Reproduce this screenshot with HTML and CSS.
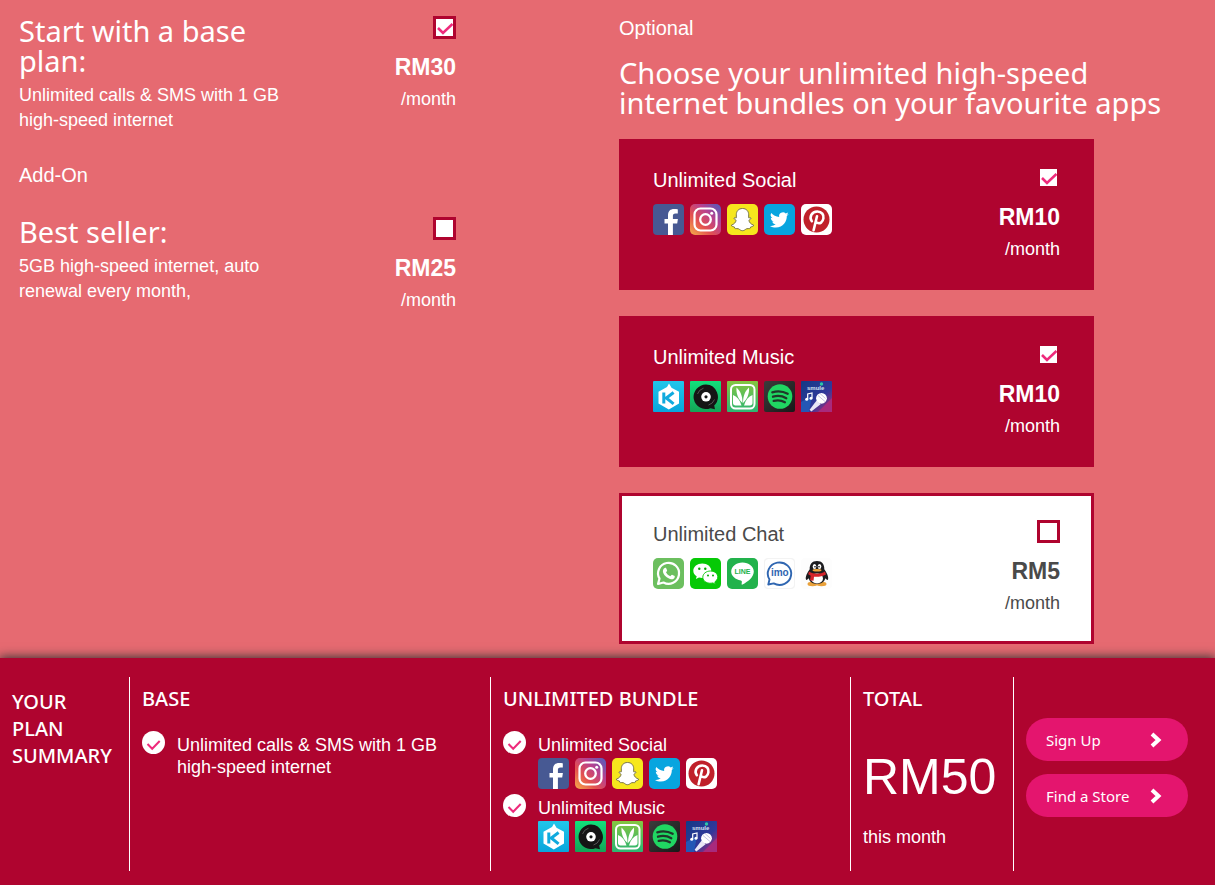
FILE: index.html
```html
<!DOCTYPE html>
<html lang="en">
<head>
  <meta charset="UTF-8">
  <meta name="viewport" content="width=device-width, initial-scale=1.0">
  <title>Build Your Plan</title>
  <link rel="stylesheet" href="styles.css">
</head>
<body>
  <!-- Gradients for the app icons -->
  <svg class="gradients" aria-hidden="true">
    <defs>
      <linearGradient id="igGrad" x1="0" y1="1" x2="1" y2="0">
        <stop offset="0" stop-color="#f5b04a"/>
        <stop offset="0.35" stop-color="#e4504f"/>
        <stop offset="0.65" stop-color="#b8418f"/>
        <stop offset="1" stop-color="#4b5fc0"/>
      </linearGradient>
      <linearGradient id="kkGrad" x1="0" y1="0" x2="0" y2="1">
        <stop offset="0" stop-color="#22c6ea"/>
        <stop offset="1" stop-color="#08a5dc"/>
      </linearGradient>
      <linearGradient id="joGrad" x1="0" y1="0" x2="0" y2="1">
        <stop offset="0" stop-color="#12e07c"/>
        <stop offset="1" stop-color="#14a457"/>
      </linearGradient>
      <linearGradient id="saGrad" x1="0" y1="0" x2="0" y2="1">
        <stop offset="0" stop-color="#86c540"/>
        <stop offset="1" stop-color="#2bb673"/>
      </linearGradient>
      <linearGradient id="spGrad" x1="0" y1="0" x2="1" y2="1">
        <stop offset="0" stop-color="#3c3c3c"/>
        <stop offset="1" stop-color="#181818"/>
      </linearGradient>
      <linearGradient id="smGrad" x1="0" y1="0" x2="1" y2="1">
        <stop offset="0" stop-color="#123a86"/>
        <stop offset="0.6" stop-color="#33389a"/>
        <stop offset="1" stop-color="#c02b6d"/>
      </linearGradient>
    </defs>
  </svg>

  <!-- App icons, reused in the cards and in the summary -->
  <svg class="sprite" aria-hidden="true">
    <symbol id="facebook" viewBox="0 0 31 31">
      <rect width="31" height="31" rx="4" fill="#475993"/>
      <path d="M15 31V19.500h-3.500v-4.500h3.500v-3.500c0-4.500 2.500-6.500 6-6.500 1.700 0 3.100.1 3.800.3v4.200h-2.300c-2 0-2.600 1-2.600 2.500v3h5l-.7 4.500h-4.300V31z" fill="#fff"/>
    </symbol>
    <symbol id="instagram" viewBox="0 0 31 31">
      <rect width="31" height="31" rx="5" fill="url(#igGrad)"/>
      <rect x="4.500" y="4.500" width="22" height="22" rx="6" fill="none" stroke="#fff" stroke-width="2.200"/>
      <circle cx="15.500" cy="15.500" r="5.300" fill="none" stroke="#fff" stroke-width="2.300"/>
      <circle cx="21.700" cy="9.300" r="1.500" fill="#fff"/>
    </symbol>
    <symbol id="snapchat" viewBox="0 0 31 31">
      <rect width="31" height="31" rx="5" fill="#f6e71d"/>
      <path d="M15.500 4.500c-4 0-6.200 2.800-6.200 6.300v3c-.8.300-2-.6-2.300.4-.2 1 2 1.300 2 2.300 0 1.600-2.200 4-4.600 4.600-.5 1.300 2.300 1.600 3 1.900.4.600.2 1.600.9 1.700 1 .1 2-.4 3.200.1 1.200.6 2.200 1.900 4 1.900s2.800-1.300 4-1.900c1.200-.5 2.200 0 3.200-.1.700-.1.500-1.100.9-1.700.7-.3 3.500-.6 3-1.900-2.400-.6-4.600-3-4.600-4.600 0-1 2.200-1.300 2-2.300-.3-1-1.500-.1-2.300-.4v-3c0-3.500-2.200-6.300-6.200-6.300z" fill="#fff" stroke="#777449" stroke-width="1"/>
    </symbol>
    <symbol id="twitter" viewBox="0 0 31 31">
      <rect width="31" height="31" rx="5" fill="#08a5df"/>
      <path d="M24.700 10.100a7.600 7.600 0 0 1-2.200.6 3.800 3.800 0 0 0 1.700-2.100c-.8.500-1.600.8-2.500 1a3.800 3.800 0 0 0-6.500 3.500c-3.200-.2-6-1.700-7.900-4a3.800 3.800 0 0 0 1.200 5.100c-.6 0-1.200-.2-1.700-.5 0 1.900 1.300 3.500 3 3.800-.5.200-1.100.2-1.700.1.500 1.500 1.900 2.600 3.600 2.700a7.700 7.700 0 0 1-5.700 1.600c1.700 1.100 3.700 1.700 5.900 1.700 7.200 0 11.100-6 10.900-11.500.8-.6 1.400-1.200 1.900-2z" fill="#fff"/>
    </symbol>
    <symbol id="pinterest" viewBox="0 0 31 31">
      <rect width="31" height="31" rx="5" fill="#fff"/>
      <circle cx="15.500" cy="15.500" r="13" fill="#c0202a"/>
      <path d="M10.800 17.200c-3-3.800-.1-9.700 5.500-9.700 4.700 0 6.700 3.300 6.100 6.900-.6 3.800-3.500 5.900-6.400 4.300M16 12.300l-3.400 14" fill="none" stroke="#fff" stroke-width="2.600" stroke-linecap="round"/>
    </symbol>
    <symbol id="kkbox" viewBox="0 0 31 31">
      <rect width="31" height="31" rx="1" fill="url(#kkGrad)"/>
      <path d="M16 2.500l2.500 4.200 7.500 4.100v11.700l-10.200 5.900-10.300-5.900V10.800L14 6z" fill="#fff"/>
      <path d="M10.800 11.500v11M20.600 11.500l-7.300 5.500 7.300 5.800" fill="none" stroke="#10aade" stroke-width="3"/>
    </symbol>
    <symbol id="joox" viewBox="0 0 31 31">
      <rect width="31" height="31" rx="1" fill="url(#joGrad)"/>
      <path d="M16 3.500a12.300 12.300 0 1 0 4.500 23.700l4.500 1-.8-3.700A12.300 12.300 0 0 0 16 3.500z" fill="#151515"/>
      <path d="M7.500 13a9 9 0 0 1 6-5.800M24.500 18.500a9 9 0 0 1-6 5.500" fill="none" stroke="#555" stroke-width="1"/>
      <circle cx="16" cy="15.800" r="4.800" fill="#fff"/>
      <circle cx="16" cy="15.800" r="1.600" fill="#151515"/>
    </symbol>
    <symbol id="saavn" viewBox="0 0 31 31">
      <rect width="31" height="31" rx="1" fill="url(#saGrad)"/>
      <rect x="4" y="4" width="23.500" height="23.500" rx="4.500" fill="none" stroke="#fff" stroke-width="2"/>
      <path d="M9.500 6.500c4 3.500 6 8.500 6 15.500-4-3.500-6.500-9-6-15.500zM22 6.500c-4 3.500-6 8.500-6 15.500 4-3.500 6.500-9 6-15.500z" fill="#fff"/>
      <path d="M6 14c4 1.500 7 5 8.500 10.500H8.500C7 24.500 6 23.500 6 22zM25.500 14c-4 1.500-7 5-8.500 10.500h6c1.500 0 2.500-1 2.500-2.500z" fill="#fff"/>
    </symbol>
    <symbol id="spotify" viewBox="0 0 31 31">
      <rect width="31" height="31" rx="2" fill="url(#spGrad)"/>
      <circle cx="16" cy="15.500" r="12.300" fill="#20d662"/>
      <path d="M8.300 11.300c5.200-1.500 10.800-1 15.400 1.500M9 15.700c4.500-1.300 9.300-.8 13.300 1.500M9.700 19.900c3.800-1 7.800-.6 11.200 1.300" fill="none" stroke="#20362a" stroke-width="2.300" stroke-linecap="round"/>
    </symbol>
    <symbol id="smule" viewBox="0 0 31 31">
      <rect width="31" height="31" rx="1" fill="url(#smGrad)"/>
      <path d="M0 31V21l11-6L8 31z" fill="#2457b5"/>
      <path d="M31 17v14H17z" fill="#a82a7c"/>
      <text x="6" y="9" class="icon-smule">smule</text>
      <circle cx="20.500" cy="3" r="1.700" fill="#2ec7a6"/>
      <path d="M15.800 19.200l3.800 4-9.300 7.300-1.700-1.700z" fill="#e9e6f5"/>
      <circle cx="20.500" cy="17.300" r="5.400" fill="#fff"/>
      <path d="M17 14.500l7 6M19 12.500l5.500 5" stroke="#b9b4d9" stroke-width="0.800"/>
      <path d="M6.700 18v-5l4.300-1v5" fill="none" stroke="#fff" stroke-width="1.200"/>
      <circle cx="5.700" cy="18.200" r="1.500" fill="#fff"/>
      <circle cx="10" cy="17.200" r="1.500" fill="#fff"/>
    </symbol>
    <symbol id="whatsapp" viewBox="0 0 31 31">
      <rect width="31" height="31" rx="5" fill="#6cbf5f"/>
      <path d="M5 26l1.500-5.400a10.500 10.500 0 1 1 4 3.900z" fill="none" stroke="#fff" stroke-width="2.200" stroke-linejoin="round"/>
      <path d="M12.200 9.800c.8-.1 1 .3 1.900 2.700.2.600-.8 1.200-1.100 1.700.9 2 2.400 3.200 4.400 4 .5-.4 1.200-1.600 1.700-1.400 2.400 1.100 2.800 1.200 2.700 1.900-.3 2-2.100 2.700-3.800 2.500-4-.6-7.700-4.300-8.100-7.600-.1-1.800.9-3.600 2.300-3.800z" fill="#fff"/>
    </symbol>
    <symbol id="wechat" viewBox="0 0 31 31">
      <rect width="31" height="31" rx="5" fill="#06c906"/>
      <path d="M12.300 5.500c-5 0-9 3.200-9 7.200 0 2.300 1.300 4.300 3.400 5.600l-.8 2.700 3.100-1.500c5.500 1.700 12.200-1.600 12.300-6.800 0-4-4-7.200-9-7.200z" fill="#fff"/>
      <path d="M20.500 13c-4.300 0-7.700 2.700-7.700 6.200 0 4.400 5.200 7 10.100 5.700l2.600 1.400-.7-2.400c5.700-3.800 2.800-10.900-4.300-10.900z" fill="#fff" stroke="#06c906" stroke-width="0.900"/>
      <circle cx="9.300" cy="10.700" r="1.200" fill="#06a906"/>
      <circle cx="15.300" cy="10.700" r="1.200" fill="#06a906"/>
      <circle cx="18" cy="17.500" r="1" fill="#06a906"/>
      <circle cx="23" cy="17.500" r="1" fill="#06a906"/>
    </symbol>
    <symbol id="line" viewBox="0 0 31 31">
      <rect width="31" height="31" rx="5" fill="#22b24c"/>
      <path d="M15.500 4.500c-6.300 0-11.300 4-11.300 9.100 0 4.500 4.300 8.100 9.600 8.900 1.600.4 1 1.900.8 3.600 0 .6.300.8.900.5 5.300-2.800 11.300-7.200 11.300-13 0-5.100-5-9.100-11.300-9.100z" fill="#fff"/>
      <text x="15.500" y="16" class="icon-line">LINE</text>
    </symbol>
    <symbol id="imo" viewBox="0 0 31 31">
      <rect width="31" height="31" rx="4" fill="#f3f3f3"/>
      <rect x="1" y="1" width="29" height="29" rx="4" fill="#fff"/>
      <path d="M4.300 26.500l1.200-5a11.700 11.200 0 1 1 4.200 3.900z" fill="#fff" stroke="#2f66b1" stroke-width="1.900" stroke-linejoin="round"/>
      <text x="15.800" y="18" class="icon-imo">imo</text>
    </symbol>
    <symbol id="qq" viewBox="0 0 31 31">
      <rect width="31" height="31" rx="4" fill="#fdfdfd"/>
      <ellipse cx="11.500" cy="26" rx="5" ry="2.200" fill="#e9a13b"/>
      <ellipse cx="20.500" cy="26" rx="5" ry="2.200" fill="#e9a13b"/>
      <path d="M16 3c-5 0-7.500 3.500-7.300 8.300C6.500 14.500 4 19 5 21.500c.5 1 2-.2 2.700-1.200C8.500 24 12 26 16 26s7.500-2 8.300-5.700c.7 1 2.200 2.200 2.700 1.200 1-2.500-1.500-7-3.700-10.200C23.500 6.500 21 3 16 3z" fill="#1d1d20"/>
      <ellipse cx="16" cy="20.500" rx="6" ry="5" fill="#fff"/>
      <ellipse cx="13.500" cy="8.500" rx="1.800" ry="2.600" fill="#fff"/>
      <ellipse cx="18.500" cy="8.500" rx="1.800" ry="2.600" fill="#fff"/>
      <circle cx="14" cy="8.800" r="0.800"/>
      <circle cx="18" cy="8.800" r="0.800"/>
      <ellipse cx="16" cy="12.300" rx="4.500" ry="1.300" fill="#f0a63c"/>
      <path d="M8 13.500c4.500 3 11.500 3 16 0l1 3c-3.500 2-8.500 2.700-12 2.200l-.5 4-3.500-.5.700-4.500-2.500-1.400z" fill="#d5242b"/>
    </symbol>
    <symbol id="chevron" viewBox="0 0 12 16">
      <path d="M2 2l6.500 6L2 14" fill="none" stroke="#fff" stroke-width="4"/>
    </symbol>
    <symbol id="tick" viewBox="0 0 23 23">
      <circle cx="11.500" cy="11.500" r="11.500" fill="#fff"/>
      <path d="M5.500 13l4.700 4.800 7.500-7.800" fill="none" stroke="#ee2a7b" stroke-width="2"/>
    </symbol>
  </svg>

  <main class="builder">
    <!-- Base plan and add-on -->
    <section class="column">
      <div class="plan">
        <div class="plan-info">
          <h2><label for="base">Start with a base plan:</label></h2>
          <p>Unlimited calls &amp; SMS with 1 GB high-speed internet</p>
        </div>
        <div class="price">
          <input type="checkbox" id="base" checked>
          <strong>RM30</strong>
          <span>/month</span>
        </div>
      </div>
      <p class="kicker addon">Add-On</p>
      <div class="plan">
        <div class="plan-info">
          <h2><label for="addon">Best seller:</label></h2>
          <p>5GB high-speed internet, auto renewal every month,</p>
        </div>
        <div class="price">
          <input type="checkbox" id="addon">
          <strong>RM25</strong>
          <span>/month</span>
        </div>
      </div>
    </section>

    <!-- Optional bundles -->
    <section class="column">
      <p class="kicker">Optional</p>
      <h2 class="bundle-title">Choose your unlimited high-speed internet bundles on your favourite apps</h2>
      <div class="bundles">
        <div class="bundle selected">
          <div>
            <label class="kicker" for="social">Unlimited Social</label>
            <div class="apps">
              <svg><use href="#facebook"/></svg>
              <svg><use href="#instagram"/></svg>
              <svg><use href="#snapchat"/></svg>
              <svg><use href="#twitter"/></svg>
              <svg><use href="#pinterest"/></svg>
            </div>
          </div>
          <div class="price">
            <input type="checkbox" id="social" checked>
            <strong>RM10</strong>
            <span>/month</span>
          </div>
        </div>
        <div class="bundle selected">
          <div>
            <label class="kicker" for="music">Unlimited Music</label>
            <div class="apps">
              <svg><use href="#kkbox"/></svg>
              <svg><use href="#joox"/></svg>
              <svg><use href="#saavn"/></svg>
              <svg><use href="#spotify"/></svg>
              <svg><use href="#smule"/></svg>
            </div>
          </div>
          <div class="price">
            <input type="checkbox" id="music" checked>
            <strong>RM10</strong>
            <span>/month</span>
          </div>
        </div>
        <div class="bundle">
          <div>
            <label class="kicker" for="chat">Unlimited Chat</label>
            <div class="apps">
              <svg><use href="#whatsapp"/></svg>
              <svg><use href="#wechat"/></svg>
              <svg><use href="#line"/></svg>
              <svg><use href="#imo"/></svg>
              <svg><use href="#qq"/></svg>
            </div>
          </div>
          <div class="price">
            <input type="checkbox" id="chat">
            <strong>RM5</strong>
            <span>/month</span>
          </div>
        </div>
      </div>
    </section>
  </main>

  <!-- Plan summary -->
  <footer class="summary">
    <div class="cell">
      <h3 class="summary-title">YOUR PLAN SUMMARY</h3>
    </div>
    <div class="cell">
      <h3>BASE</h3>
      <ul>
        <li>
          <svg class="tick"><use href="#tick"/></svg>
          <div class="item">Unlimited calls &amp; SMS with 1 GB high-speed internet</div>
        </li>
      </ul>
    </div>
    <div class="cell">
      <h3>UNLIMITED BUNDLE</h3>
      <ul>
        <li>
          <svg class="tick"><use href="#tick"/></svg>
          <div class="item">Unlimited Social
            <div class="apps">
              <svg><use href="#facebook"/></svg>
              <svg><use href="#instagram"/></svg>
              <svg><use href="#snapchat"/></svg>
              <svg><use href="#twitter"/></svg>
              <svg><use href="#pinterest"/></svg>
            </div>
          </div>
        </li>
        <li>
          <svg class="tick"><use href="#tick"/></svg>
          <div class="item">Unlimited Music
            <div class="apps">
              <svg><use href="#kkbox"/></svg>
              <svg><use href="#joox"/></svg>
              <svg><use href="#saavn"/></svg>
              <svg><use href="#spotify"/></svg>
              <svg><use href="#smule"/></svg>
            </div>
          </div>
        </li>
      </ul>
    </div>
    <div class="cell">
      <h3>TOTAL</h3>
      <p class="total">RM50</p>
      <p>this month</p>
    </div>
    <div class="cell actions">
      <a class="btn" href="#signup">Sign Up <svg><use href="#chevron"/></svg></a>
      <a class="btn" href="#stores">Find a Store <svg><use href="#chevron"/></svg></a>
    </div>
  </footer>
</body>
</html>
```
FILE: styles.css
```css
/* General Reset */
* {
  box-sizing: border-box;
}

body, h2, h3, p, ul {
  margin: 0;
  padding: 0;
}

body {
  background-color: #e66a71;
  color: #fff;
  font-family: "Liberation Sans", Arial, sans-serif;
  font-size: 18px;
  line-height: 25px;
}

.sprite {
  display: none;
}

/* Kept rendered, as gradients do not resolve under display: none */
.gradients {
  position: absolute;
  width: 0;
  height: 0;
}

/* Plan builder */
.builder {
  display: grid;
  grid-template-columns: 1fr 1fr;
  gap: 23px;
  padding: 16px 19px 14px;
}

h2 {
  font-family: "Noto Sans", sans-serif;
  font-size: 29px;
  font-weight: 400;
  line-height: 30px;
}

.kicker {
  display: block;
  font-size: 20px;
}

.addon {
  margin: 30px 0 29px;
}

.plan {
  display: flex;
  justify-content: space-between;
  max-width: 437px;
}

.plan-info {
  max-width: 262px;
}

.plan-info p {
  margin-top: 7px;
}

.price {
  display: flex;
  flex-direction: column;
  align-items: flex-end;
}

.price strong {
  margin: 13px 0 5px;
  font-size: 23px;
  line-height: 30px;
}

input[type="checkbox"] {
  appearance: none;
  width: 23px;
  height: 23px;
  margin: 0;
  border: 3px solid #af042f;
  background: #fff center / 17px 17px no-repeat;
}

input[type="checkbox"]:checked {
  background-image: url("data:image/svg+xml,%3Csvg xmlns='http://www.w3.org/2000/svg' viewBox='0 0 17 17'%3E%3Cpath d='M2 9l5 5L16.500 5' fill='none' stroke='%23ee2a7b' stroke-width='2.600'/%3E%3C/svg%3E");
}

/* Bundle cards */
.bundle-title {
  margin: 17px 0 21px;
}

.bundles {
  display: grid;
  gap: 26px;
  max-width: 475px;
}

.bundle {
  display: flex;
  justify-content: space-between;
  padding: 24px 31px 25px;
  border: 3px solid #af042f;
  background-color: #fff;
  color: #4a4a4a;
}

.bundle.selected {
  background-color: #af042f;
  color: #fff;
}

.bundle .kicker {
  padding-top: 2px;
}

.apps {
  display: flex;
  gap: 6px;
}

.bundle .apps {
  margin-top: 11px;
}

.apps svg {
  width: 31px;
  height: 31px;
}

.icon-smule {
  fill: #d5e2f2;
  font: bold 6px "Liberation Sans", sans-serif;
}

.icon-line {
  fill: #22b24c;
  font: bold 7px "Liberation Sans", sans-serif;
  text-anchor: middle;
}

.icon-imo {
  fill: #2f66b1;
  font: bold 10px "Liberation Sans", sans-serif;
  text-anchor: middle;
}

/* Summary bar */
.summary {
  display: grid;
  grid-template-columns: 130fr 361fr 360fr 163fr 201fr;
  padding: 19px 0 14px;
  background-color: #af042f;
  box-shadow: 0 0 10px 1px #333;
  line-height: 22px;
}

.cell {
  min-height: 194px;
  padding: 8px 12px 0;
  border-right: 1px solid #fff;
}

.cell:last-child {
  border-right: 0;
}

.cell h3 {
  font-family: "Noto Sans", sans-serif;
  font-size: 20px;
  font-weight: 500;
  line-height: 27px;
}

.summary-title {
  padding-top: 3px;
}

.cell ul {
  margin-top: 19px;
  list-style: none;
}

.cell li {
  display: flex;
  gap: 12px;
}

.tick {
  flex: none;
  width: 23px;
  height: 23px;
}

.item {
  padding-top: 3px;
  max-width: 300px;
}

.item .apps {
  margin: 2px 0 5px;
}

.total {
  margin: 37px 0 21px;
  font-size: 50px;
  line-height: 56px;
}

.actions {
  display: flex;
  flex-direction: column;
  gap: 13px;
  padding: 41px 27px 0 12px;
}

.btn {
  display: flex;
  align-items: center;
  justify-content: space-between;
  height: 43px;
  padding: 0 26px 0 20px;
  border-radius: 22px;
  background-color: #e4156e;
  color: #fff;
  font-family: "Noto Sans", sans-serif;
  font-size: 15px;
  text-decoration: none;
}

.btn svg {
  width: 12px;
  height: 16px;
}

@media (max-width: 900px) {
  .builder,
  .summary {
    grid-template-columns: 1fr;
  }

  .cell {
    min-height: 0;
    padding-bottom: 16px;
    border-right: 0;
  }
}
```
